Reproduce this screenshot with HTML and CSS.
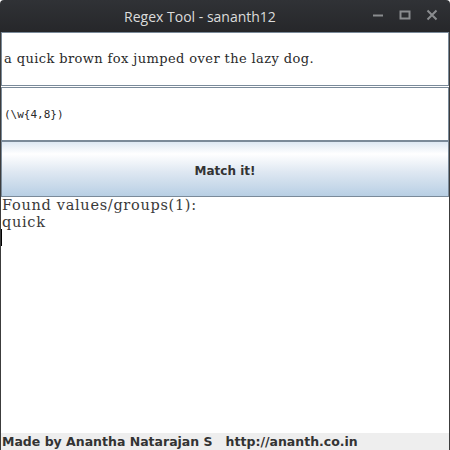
FILE: index.html
```html
<!DOCTYPE html>
<html>
<head>
<meta charset="utf-8">
<link rel="stylesheet" href="styles.css">
</head>
<body>
<div class="window">
  <div class="titlebar">
    <span class="title">Regex Tool - sananth12</span>
    <div class="controls">
      <svg width="12" height="12" viewBox="0 0 12 12"><path d="M1 6.5h10" stroke="#8a8c8f" stroke-width="2"/></svg>
      <svg width="12" height="12" viewBox="0 0 12 12"><rect x="1.5" y="2.5" width="9" height="7" fill="none" stroke="#8a8c8f" stroke-width="2"/></svg>
      <svg width="12" height="12" viewBox="0 0 12 12"><path d="M1.5 1.5l9 9M10.5 1.5l-9 9" stroke="#8a8c8f" stroke-width="2"/></svg>
    </div>
  </div>
  <div class="content">
    <div class="field serif">a quick brown fox jumped over the lazy dog.</div>
    <div class="field mono">(\w{4,8})</div>
    <div class="button">Match it!</div>
    <div class="output">
      <div>Found values/groups(1):</div>
      <div>quick</div>
      <div class="caret"></div>
    </div>
    <div class="footer">Made by Anantha Natarajan S&nbsp;&nbsp;&nbsp;http://ananth.co.in</div>
  </div>
</div>
</body>
</html>
```
FILE: styles.css
```css
html, body {
  margin: 0;
  padding: 0;
  width: 450px;
  height: 450px;
  overflow: hidden;
  background: #ffffff;
}
.window {
  width: 450px;
  height: 450px;
  display: flex;
  flex-direction: column;
}
.titlebar {
  height: 32px;
  flex: none;
  background: linear-gradient(#303236, #26272a);
  display: flex;
  align-items: center;
  justify-content: center;
  position: relative;
  border-radius: 4px 4px 0 0;
  padding-right: 50px;
}
.title {
  font-family: "Open Sans", sans-serif;
  font-size: 14px;
  color: #dcdcdc;
}
.controls {
  position: absolute;
  right: 12px;
  top: 9px;
  display: flex;
  gap: 15px;
}
.content {
  flex: 1;
  display: flex;
  flex-direction: column;
  border-left: 1px solid #3c3c3c;
  border-right: 1px solid #3c3c3c;
  background: #ffffff;
}
.field {
  height: 54px;
  flex: none;
  box-sizing: border-box;
  border: 1px solid #7a8a99;
  box-shadow: inset 0 0 0 1px #ffffff;
  display: flex;
  align-items: center;
  padding-left: 2px;
  color: #2a2a2a;
  margin-bottom: 1px;
}
.serif {
  font-family: "DejaVu Serif", serif;
  font-size: 13px;
  letter-spacing: 0.4px;
  padding-bottom: 2px;
}
.mono {
  font-family: "DejaVu Sans Mono", monospace;
  font-size: 11px;
  margin-bottom: 0;
}
.button {
  height: 56px;
  flex: none;
  box-sizing: border-box;
  border: 1px solid #7a8a99;
  background: linear-gradient(#dde8f3 0%, #ffffff 22%, #dfe8f2 55%, #b8cfe4 100%);
  display: flex;
  align-items: center;
  justify-content: center;
  padding-top: 3px;
  font-family: "DejaVu Sans", sans-serif;
  font-weight: bold;
  font-size: 12px;
  color: #333;
}
.output {
  flex: 1;
  font-family: "DejaVu Serif", serif;
  font-size: 14.5px;
  letter-spacing: 0.7px;
  line-height: 17px;
  color: #3a3a3a;
  padding-left: 1px;
}
.caret {
  width: 1px;
  height: 17px;
  background: #000;
  margin-left: -1px;
  margin-top: -2px;
}
.footer {
  height: 17px;
  flex: none;
  background: #eeeeee;
  font-family: "DejaVu Sans", sans-serif;
  font-weight: bold;
  font-size: 12.5px;
  line-height: 17px;
  color: #333;
  padding-left: 1px;
}
```
